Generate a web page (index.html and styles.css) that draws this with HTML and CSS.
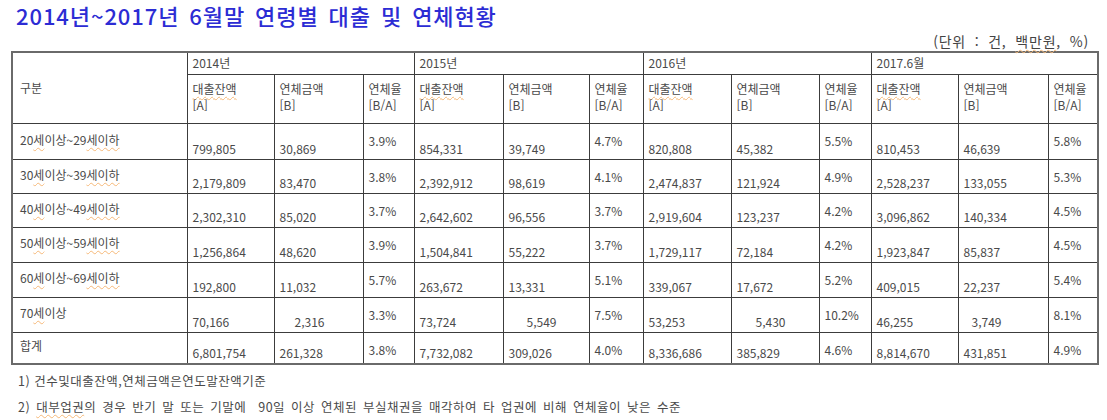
FILE: index.html
```html
<!DOCTYPE html>
<html lang="ko">
<head>
<meta charset="utf-8">
<title>2014년~2017년 6월말 연령별 대출 및 연체현황</title>
<link rel="stylesheet" href="styles.css">
</head>
<body>
<div class="page">
  <h1 class="title">2014년~2017년 6월말 연령별 대출 및 연체현황</h1>
  <div class="unit">(단위 : 건, <span class="sq">백만원</span>, %)</div>
  <table class="grid">
    <colgroup>
      <col class="c-label">
      <col class="c-a14"><col class="c-b14"><col class="c-r14">
      <col class="c-a15"><col class="c-b15"><col class="c-r15">
      <col class="c-a16"><col class="c-b16"><col class="c-r16">
      <col class="c-a17"><col class="c-b17"><col class="c-r17">
    </colgroup>
    <thead>
      <tr class="r-year">
        <th rowspan="2" class="gubun">구분</th>
        <th colspan="3">2014년</th>
        <th colspan="3">2015년</th>
        <th colspan="3">2016년</th>
        <th colspan="3">2017.6월</th>
      </tr>
      <tr class="r-sub">
        <th><span class="sq">대출잔액</span><br>[A]</th><th>연체금액<br>[B]</th><th>연체율<br>[B/A]</th>
        <th><span class="sq">대출잔액</span><br>[A]</th><th>연체금액<br>[B]</th><th>연체율<br>[B/A]</th>
        <th><span class="sq">대출잔액</span><br>[A]</th><th>연체금액<br>[B]</th><th>연체율<br>[B/A]</th>
        <th><span class="sq">대출잔액</span><br>[A]</th><th>연체금액<br>[B]</th><th>연체율<br>[B/A]</th>
      </tr>
    </thead>
    <tbody>
      <tr class="r1">
        <td class="lbl">20<span class="sq">세</span>이상~29<span class="sq">세이하</span></td>
        <td class="num">799,805</td><td class="num">30,869</td><td class="pct">3.9%</td>
        <td class="num">854,331</td><td class="num">39,749</td><td class="pct">4.7%</td>
        <td class="num">820,808</td><td class="num">45,382</td><td class="pct">5.5%</td>
        <td class="num">810,453</td><td class="num">46,639</td><td class="pct">5.8%</td>
      </tr>
      <tr class="r2">
        <td class="lbl">30<span class="sq">세</span>이상~39<span class="sq">세이하</span></td>
        <td class="num">2,179,809</td><td class="num">83,470</td><td class="pct">3.8%</td>
        <td class="num">2,392,912</td><td class="num">98,619</td><td class="pct">4.1%</td>
        <td class="num">2,474,837</td><td class="num">121,924</td><td class="pct">4.9%</td>
        <td class="num">2,528,237</td><td class="num">133,055</td><td class="pct">5.3%</td>
      </tr>
      <tr class="r3">
        <td class="lbl">40<span class="sq">세</span>이상~49<span class="sq">세이하</span></td>
        <td class="num">2,302,310</td><td class="num">85,020</td><td class="pct">3.7%</td>
        <td class="num">2,642,602</td><td class="num">96,556</td><td class="pct">3.7%</td>
        <td class="num">2,919,604</td><td class="num">123,237</td><td class="pct">4.2%</td>
        <td class="num">3,096,862</td><td class="num">140,334</td><td class="pct">4.5%</td>
      </tr>
      <tr class="r4">
        <td class="lbl">50<span class="sq">세</span>이상~59<span class="sq">세이하</span></td>
        <td class="num">1,256,864</td><td class="num">48,620</td><td class="pct">3.9%</td>
        <td class="num">1,504,841</td><td class="num">55,222</td><td class="pct">3.7%</td>
        <td class="num">1,729,117</td><td class="num">72,184</td><td class="pct">4.2%</td>
        <td class="num">1,923,847</td><td class="num">85,837</td><td class="pct">4.5%</td>
      </tr>
      <tr class="r5">
        <td class="lbl">60<span class="sq">세</span>이상~69<span class="sq">세이하</span></td>
        <td class="num">192,800</td><td class="num">11,032</td><td class="pct">5.7%</td>
        <td class="num">263,672</td><td class="num">13,331</td><td class="pct">5.1%</td>
        <td class="num">339,067</td><td class="num">17,672</td><td class="pct">5.2%</td>
        <td class="num">409,015</td><td class="num">22,237</td><td class="pct">5.4%</td>
      </tr>
      <tr class="r6">
        <td class="lbl">70<span class="sq">세</span>이상</td>
        <td class="num">70,166</td><td class="num ind14">2,316</td><td class="pct">3.3%</td>
        <td class="num">73,724</td><td class="num ind15">5,549</td><td class="pct">7.5%</td>
        <td class="num">53,253</td><td class="num ind16">5,430</td><td class="pct">10.2%</td>
        <td class="num">46,255</td><td class="num ind17">3,749</td><td class="pct">8.1%</td>
      </tr>
      <tr class="r7">
        <td class="lbl">합계</td>
        <td class="num">6,801,754</td><td class="num">261,328</td><td class="pct">3.8%</td>
        <td class="num">7,732,082</td><td class="num">309,026</td><td class="pct">4.0%</td>
        <td class="num">8,336,686</td><td class="num">385,829</td><td class="pct">4.6%</td>
        <td class="num">8,814,670</td><td class="num">431,851</td><td class="pct">4.9%</td>
      </tr>
    </tbody>
  </table>
  <p class="note note1">1) 건수및대출잔액,연체금액은연도말잔액기준</p>
  <p class="note note2">2) <span class="sq">대부업권</span>의 경우 반기 말 또는 기말에 &nbsp;90일 이상 연체된 부실채권을 매각하여 타 업권에 비해 연체율이 낮은 수준</p>
</div>
</body>
</html>
```

FILE: styles.css
```css
html, body {
  margin: 0;
  padding: 0;
  background: #ffffff;
}

body {
  font-family: "Noto Sans CJK KR", "Noto Sans", sans-serif;
  color: #4a4a4a;
}

.page {
  width: 1107px;
  height: 420px;
  padding: 2px 0 0 11px;
  box-sizing: border-box;
  overflow: hidden;
}

.title {
  margin: 0 0 0 5px;
  font-size: 22px;
  line-height: 26px;
  font-weight: 500;
  color: #2c2cd4;
  letter-spacing: 0.9px;
  word-spacing: 3px;
}

.unit {
  margin: 4px 0 0 0;
  padding-right: 18px;
  text-align: right;
  font-size: 14px;
  line-height: 19px;
  color: #444;
  letter-spacing: 0.8px;
  word-spacing: 4px;
}

.sq {
  text-decoration: underline wavy #f6b878;
  text-decoration-thickness: 1px;
  text-underline-offset: 2px;
}

.grid {
  border-collapse: collapse;
  table-layout: fixed;
  width: 1086px;
  border: 2px solid #6a6a6a;
  font-size: 12px;
  line-height: 16px;
  color: #4a4a4a;
}

.c-label { width: 175px; }
.c-a14 { width: 87px; }
.c-b14 { width: 89px; }
.c-r14 { width: 51px; }
.c-a15 { width: 89px; }
.c-b15 { width: 86px; }
.c-r15 { width: 54px; }
.c-a16 { width: 88px; }
.c-b16 { width: 88px; }
.c-r16 { width: 52px; }
.c-a17 { width: 87px; }
.c-b17 { width: 90px; }
.c-r17 { width: 50px; }

.grid th,
.grid td {
  border: 1px solid #3c3c3c;
  padding: 0 0 0 5px;
  text-align: left;
  font-weight: 400;
  white-space: nowrap;
  overflow: hidden;
}

.r-year { height: 22px; }
.r-year th { vertical-align: middle; }

.r-sub { height: 49px; }
.r-sub th { vertical-align: top; padding-top: 6px; }

.grid th.gubun {
  vertical-align: middle;
  padding-left: 7px;
  padding-top: 0;
}

.r1 { height: 36px; }
.r2 { height: 34px; }
.r3 { height: 34px; }
.r4 { height: 35px; }
.r5 { height: 35px; }
.r6 { height: 35px; }
.r7 { height: 32px; }

.grid td.lbl {
  vertical-align: middle;
  padding-left: 7px;
  padding-bottom: 3px;
}

.grid td.pct {
  vertical-align: top;
  padding-top: 9px;
}

.grid td.num {
  vertical-align: bottom;
  padding-bottom: 2px;
}

.grid td.ind14 { padding-left: 20px; }
.grid td.ind15 { padding-left: 23px; }
.grid td.ind16 { padding-left: 24px; }
.grid td.ind17 { padding-left: 13px; }

.note {
  margin: 0 0 0 7px;
  font-size: 12.5px;
  color: #4a4a4a;
  letter-spacing: 0.5px;
}

.note1 {
  line-height: 20px;
  margin-top: 6px;
}

.note2 {
  line-height: 20px;
  margin-top: 6px;
  word-spacing: 2px;
}
```
